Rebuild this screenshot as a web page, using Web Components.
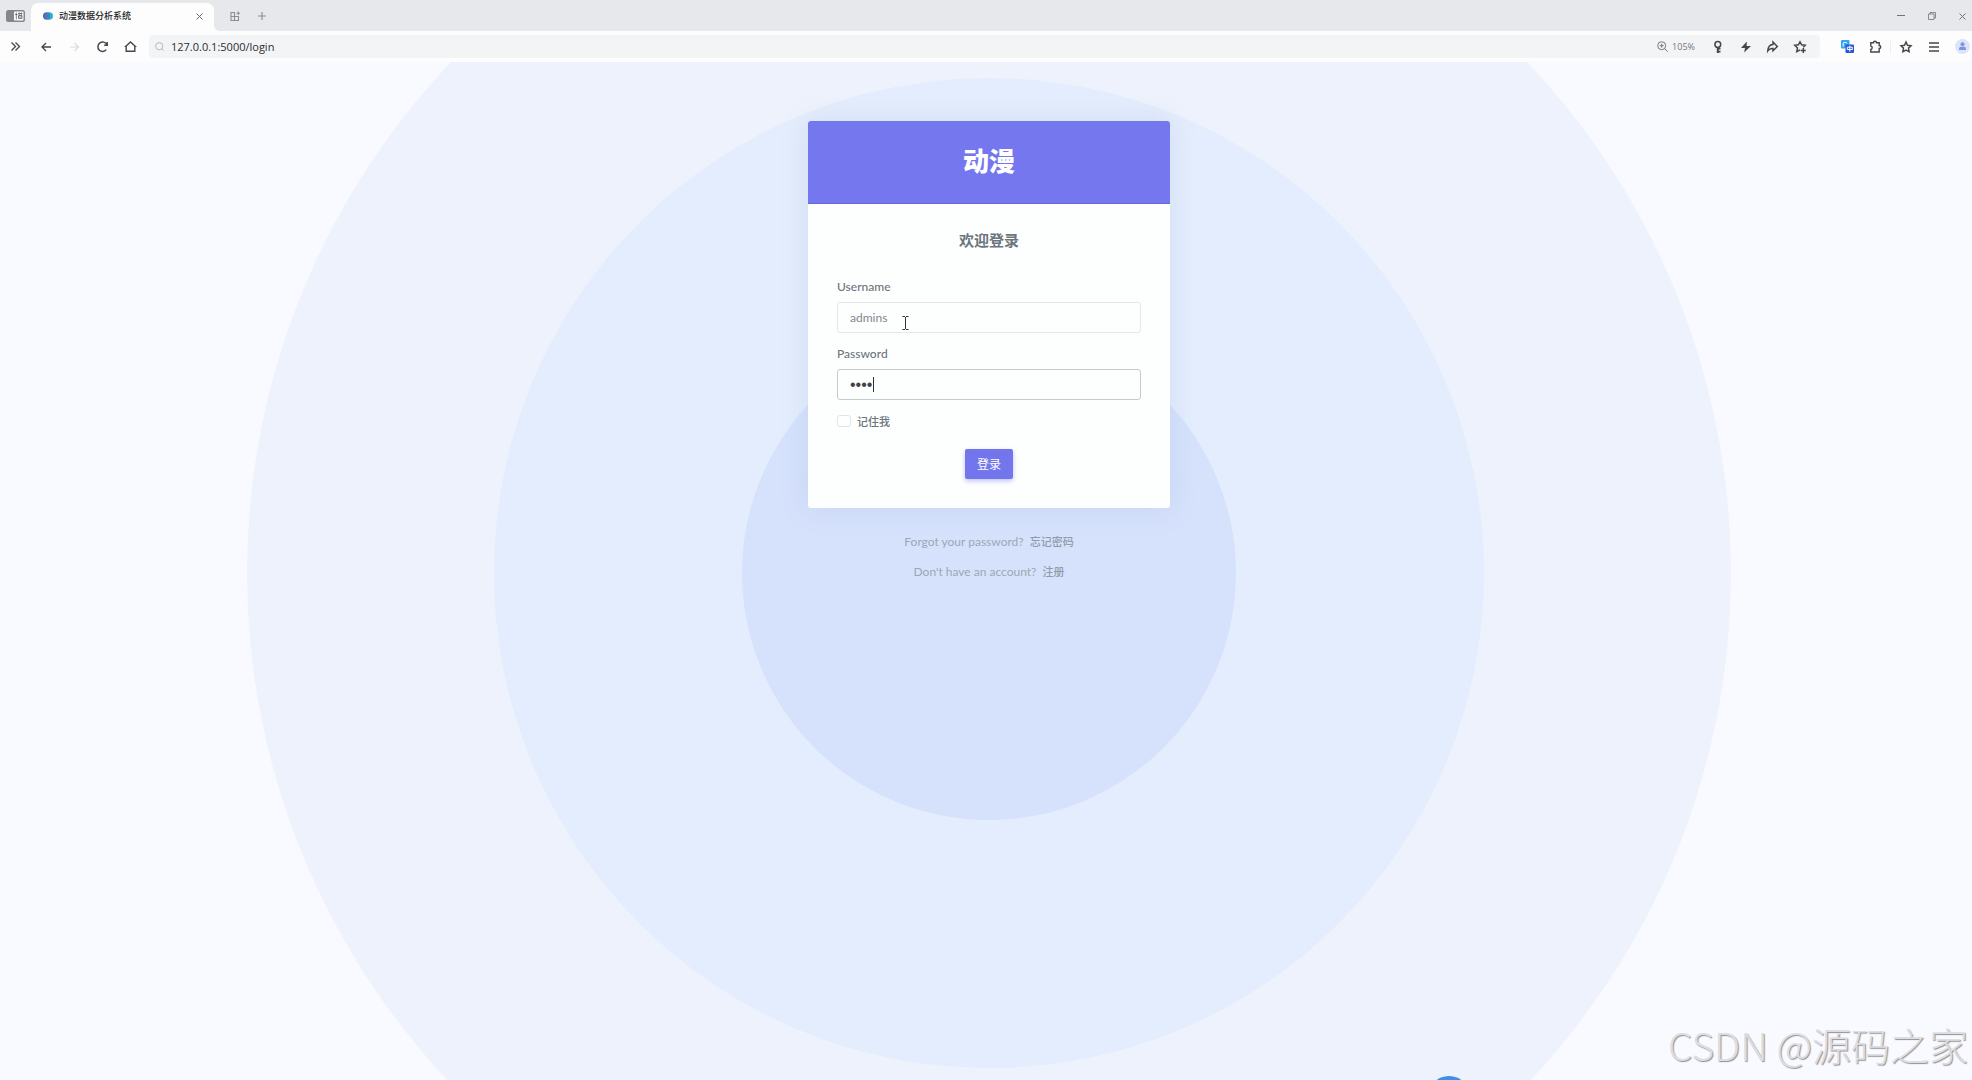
<!DOCTYPE html>
<html lang="zh-CN">
<head>
<meta charset="utf-8">
<title>动漫数据分析系统</title>
<style>
  html, body { height: 100%; margin: 0; }
  body { font-family: Lato, "Noto Sans CJK SC", sans-serif; overflow: hidden; }
</style>
</head>
<body>
<app-window>
  <tab-strip slot="tabs" label="动漫数据分析系统"></tab-strip>
  <nav-bar slot="nav" url="127.0.0.1:5000/login" zoom="105%"></nav-bar>
  <login-page></login-page>
</app-window>

<script>
const define = (name, html, setup) => {
  const template = document.createElement('template');
  template.innerHTML = html;
  customElements.define(name, class extends HTMLElement {
    constructor() {
      super();
      this.attachShadow({ mode: 'open' }).append(template.content.cloneNode(true));
    }
    connectedCallback() { if (setup) setup(this, this.shadowRoot); }
  });
};

define('app-window', `
  <style>
    :host { display: flex; flex-direction: column; height: 100vh; overflow: hidden; background: #f9faff; }
    ::slotted(login-page) { flex: 1; min-height: 0; }
  </style>
  <slot name="tabs"></slot><slot name="nav"></slot><slot></slot>`);

/* Icon button: the glyph is passed in as an inline SVG */
define('icon-button', `
  <style>
    :host { display: inline-flex; flex: none; width: var(--w, 26px); height: 24px; color: #45474c; }
    button { all: unset; display: flex; align-items: center; justify-content: center; width: 100%; height: 100%; cursor: pointer; }
    ::slotted(svg) { display: block; fill: none; stroke: currentColor; stroke-width: 1.5; overflow: visible; }
  </style>
  <button type="button"><slot></slot></button>`,
  (el, root) => root.querySelector('button').setAttribute('aria-label', el.getAttribute('name')));

define('tab-strip', `
  <style>
    :host { display: flex; align-items: flex-end; height: 31px; background: #e7e8ec; }
    .side { --w: 31px; align-self: center; }
    .tab { display: flex; align-items: center; box-sizing: border-box; width: 183px; height: 28px; padding: 0 3px 2px 12px; gap: 6px; background: #fdfdfe; border-radius: 7px 7px 0 0; position: relative; }
    .tab::after { content: ""; position: absolute; left: 100%; bottom: 0; width: 6px; height: 6px; background: radial-gradient(circle at 100% 0, transparent 6px, #fdfdfe 6px); }
    .title { flex: 1; font-size: 9px; line-height: 14px; font-weight: 500; color: #202124; white-space: nowrap; }
    .tab icon-button { --w: 24px; color: #66686c; }
    .extra { --w: 27px; height: 30px; color: #8b8d91; }
    .first { margin-left: 7px; }
    .win { display: flex; margin-left: auto; margin-right: -6px; }
    .win icon-button { --w: 31px; height: 30px; color: #707276; }
  </style>
  <icon-button class="side" name="侧边栏"><svg width="19" height="12" viewBox="0 0 19 12"><rect width="19" height="12" rx="2.500" fill="#85868a" stroke="none"/><rect x="8" y="1.500" width="9.500" height="9" rx="1" fill="#fff" stroke="none"/><path d="M9 4.500h2.500M10.300 2.500v7M12 3.500h4.500M13.200 2.500v3M15.300 2.500v3M12.500 5.500h3.500v3h-3.500zM12.500 7h3.500" stroke="#4b4c50" stroke-width=".7"/></svg></icon-button>
  <div class="tab">
    <svg width="10" height="8" viewBox="0 0 10 8"><circle cx="3.700" cy="4" r="3.700" fill="#635fa8"/><circle cx="6.300" cy="4" r="3.700" fill="#2fb1d1"/><path d="M5 .6a3.700 3.700 0 0 0 0 6.800a3.700 3.700 0 0 0 0-6.800" fill="#3a86c2"/></svg>
    <span class="title"></span>
    <icon-button name="关闭标签页"><svg width="7" height="7" viewBox="0 0 7 7"><path stroke-width="1" d="M.5.500l6 6M6.500.500l-6 6"/></svg></icon-button>
  </div>
  <icon-button class="extra first" name="标签页组"><svg width="10" height="10" viewBox="0 0 10 10"><path d="M1 1.500h3.500v4H1zM1 5.500h3.500v4H1zM4.500 5.500h4v4h-4zM6.500 2.200h3.500M8.200.5V4" stroke-width="1.100"/></svg></icon-button>
  <icon-button class="extra" name="新建标签页"><svg width="8" height="8" viewBox="0 0 8 8"><path d="M4 0v8M0 4h8" stroke-width="1.100"/></svg></icon-button>
  <div class="win">
    <icon-button name="最小化"><svg width="8" height="8" viewBox="0 0 8 8"><path d="M0 3.500h8" stroke-width="1"/></svg></icon-button>
    <icon-button name="还原"><svg width="8" height="8" viewBox="0 0 8 8"><path d="M.5 2h5.500v5.500H.5zM2 2V.500h5.500v5.500H6" stroke-width=".8"/></svg></icon-button>
    <icon-button name="关闭"><svg width="7" height="7" viewBox="0 0 7 7"><path d="M.5.500l6 6M6.500.500l-6 6" stroke-width="1"/></svg></icon-button>
  </div>`,
  (el, root) => root.querySelector('.title').textContent = el.getAttribute('label'));

define('nav-bar', `
  <style>
    :host { display: flex; align-items: center; height: 31px; background: #fdfdfe; overflow: hidden; }
    .left { display: flex; padding: 0 5px 0 2px; }
    .left icon-button { --w: 28px; }
    .left .more { --w: 26px; margin-right: 4px; }
    .left .off { color: #d9dbde; }
    .address { flex: 1; display: flex; align-items: center; height: 23px; padding: 0 7px 0 6px; background: #f3f4f6; border-radius: 4px; }
    .address > svg { fill: none; stroke: #b6b9be; }
    input { flex: 1; min-width: 0; border: 0; outline: 0; padding: 0 0 0 7px; height: 20px; background: none; font: 11px "Open Sans", sans-serif; color: #2c2e32; }
    .zoom { display: flex; align-items: center; gap: 4px; margin-right: 10px; font: 9px "Open Sans", sans-serif; color: #76787d; }
    .zoom svg { fill: none; stroke: #76787d; }
    .address icon-button { --w: 27px; }
    .right { display: flex; align-items: center; gap: 2px; margin: 0 -3px 0 14px; }
    hr { width: 1px; height: 14px; margin: 0; border: 0; background: #eeeff1; }
  </style>
  <div class="left">
    <icon-button class="more" name="展开"><svg width="9" height="9" viewBox="0 0 9 9"><path stroke-width="1.300" d="M.5.500l4 4-4 4M4.500.500l4 4-4 4"/></svg></icon-button>
    <icon-button name="后退"><svg width="10" height="10" viewBox="0 0 10 10"><path d="M10 5H1M5 1L1 5 5 9" stroke-width="1.300"/></svg></icon-button>
    <icon-button class="off" name="前进"><svg width="9" height="10" viewBox="0 0 9 10"><path d="M0 5h8.500M4.500 1l4 4-4 4" stroke-width="1.200"/></svg></icon-button>
    <icon-button name="刷新"><svg width="11" height="11" viewBox="0 0 11 11"><path d="M9.300 8.600A4.700 4.700 0 1 1 9.800 3.600M10.200 1v3.200H7.200"/></svg></icon-button>
    <icon-button name="主页"><svg width="11" height="11" viewBox="0 0 11 11"><path d="M.8 5.300L5.500.900l4.700 4.400H9.800v4.900h-8.600V5.300z" stroke-width="1.400"/></svg></icon-button>
  </div>
  <div class="address">
    <svg width="9" height="9" viewBox="0 0 9 9"><circle cx="4.200" cy="4.200" r="3.600"/><path d="M6.800 6.800l2 2"/></svg>
    <input type="text" aria-label="地址栏" spellcheck="false">
    <div class="zoom"><svg width="11" height="11" viewBox="0 0 11 11"><circle cx="4.700" cy="4.700" r="4"/><path d="M7.700 7.700l3 3M2.700 4.700h4M4.700 2.700v4"/></svg><span></span></div>
    <icon-button name="密码"><svg width="9" height="12" viewBox="0 0 9 12"><circle cx="3.800" cy="3.500" r="2.900"/><path d="M3.800 6.300V12" stroke-width="2"/><path d="M3.800 7.800h2.700M3.800 10.600h2.700" stroke-width="1.600"/></svg></icon-button>
    <icon-button name="加速"><svg width="10" height="12" viewBox="0 0 10 12"><path d="M5.800.500L0 7h4l-.8 4.500L10 5H5.600z" fill="currentColor" stroke="none"/></svg></icon-button>
    <icon-button name="分享"><svg width="11" height="11" viewBox="0 0 11 11"><path d="M6 1l4.300 4.500L6 9.800V7.500C3.500 7.200 2 8 .8 9.800 1 6 2.500 3.800 6 3.500z"/></svg></icon-button>
    <icon-button name="收藏本页"><svg width="12" height="12" viewBox="0 0 12 12"><path d="M6.200 8.800L2.800 10.600l.7-3.700L.8 4.300l3.600-.5L6 .900l1.600 2.900 3.600.5-2 2M9.300 7v5M6.800 9.500h5"/></svg></icon-button>
  </div>
  <div class="right">
    <icon-button name="翻译"><svg width="13" height="13" viewBox="0 0 13 13"><rect width="8.500" height="8.500" rx="1" fill="#36a6f2" stroke="none"/><path d="M2.200 6.500v-3q0-1 1-1h1.600q1 0 1 1" stroke="#fff" stroke-width="1"/><rect x="4.500" y="4.500" width="8.500" height="8.500" rx="1" fill="#2a55d8" stroke="none"/><path d="M6.300 7.200h5v2.300h-5zM8.800 5.700v6" stroke="#fff" stroke-width="1"/></svg></icon-button>
    <icon-button name="扩展"><svg width="11" height="12" viewBox="0 0 11 12"><path d="M.8 1.800h2.700a1.500 1.500 0 0 1 3 0h2.700v2.700a1.500 1.500 0 0 1 0 3v3.500H.8V8.500a1.800 1.800 0 0 0 0-3.500z" stroke-width="1.400"/></svg></icon-button>
    <hr>
    <icon-button name="收藏夹"><svg width="12" height="12" viewBox="0 0 12 12"><path d="M6 1l1.500 3.200 3.500.500-2.500 2.400.6 3.600L6 9l-3.100 1.700.6-3.600L1 4.700l3.500-.5z"/></svg></icon-button>
    <icon-button name="菜单"><svg width="10" height="10" viewBox="0 0 10 10"><path d="M0 1h10M0 5h10M0 9h10" stroke-width="1.400"/></svg></icon-button>
    <icon-button name="用户"><svg width="15" height="15" viewBox="0 0 15 15"><circle cx="7.500" cy="7.500" r="7.500" fill="#dde3f8" stroke="none"/><circle cx="7.500" cy="5.300" r="2" fill="#7d94e2" stroke="none"/><path d="M4 11V9.800Q4 7.800 6 7.800h3q2 0 2 2V11z" fill="#7d94e2" stroke="none"/></svg></icon-button>
  </div>`,
  (el, root) => {
    root.querySelector('input').value = el.getAttribute('url');
    root.querySelector('.zoom span').textContent = el.getAttribute('zoom');
  });

define('form-field', `
  <style>
    :host { display: block; }
    label { display: block; font-size: 12px; line-height: 18px; font-weight: 500; color: #6c757d; margin-bottom: 6px; }
    .box { position: relative; }
    input { display: block; box-sizing: border-box; width: 100%; height: 31px; padding: 0 12px; border: 1px solid #e3e8ea; border-radius: 3px; outline: 0; background: #fdfffe; font: 12px Lato, sans-serif; color: #80868b; }
    :host([active]) input { border-color: #c5cacd; color: #3f4347; font-family: "Liberation Sans", sans-serif; font-size: 16px; }
    .caret { display: none; position: absolute; left: 36px; top: 8px; width: 1px; height: 15px; background: #303236; }
    :host([active]) .caret { display: block; }
  </style>
  <label for="field"></label>
  <div class="box"><input id="field"><span class="caret"></span></div>`,
  (el, root) => {
    const input = root.querySelector('input');
    root.querySelector('label').textContent = el.getAttribute('label');
    input.type = el.getAttribute('type');
    input.value = el.getAttribute('value');
  });

define('login-card', `
  <style>
    :host { display: block; background: #fdfffe; border-radius: 3px; box-shadow: 0 0 28px rgba(120, 145, 185, .17); overflow: hidden; }
    header { display: flex; align-items: center; justify-content: center; box-sizing: border-box; height: 83px; padding-bottom: 4px; background: #7577ee; border-bottom: 1px solid #6769dc; }
    h1 { margin: 0; font: 900 26px/36px "Noto Sans CJK SC", sans-serif; color: #fff; }
    form { display: flex; flex-direction: column; padding: 26px 29px 29px; }
    h2 { margin: 0 0 28px; font: 700 15px/20px "Noto Sans CJK SC", sans-serif; text-align: center; color: #6c757d; }
    form-field { margin-bottom: 12px; }
    .remember { display: flex; align-items: center; gap: 6px; height: 18px; margin-bottom: 19px; font-size: 11px; font-weight: 500; color: #6c757d; }
    .remember input { appearance: none; box-sizing: border-box; width: 14px; height: 12px; margin: 0; border: 1px solid #dee4e8; border-radius: 3px; background: #fff; }
    .submit { align-self: center; width: 48px; height: 30px; padding: 0; border: 0; border-radius: 2px; background: #7375ec; box-shadow: 0 2px 5px rgba(114, 116, 236, .45); font: 12px/30px "Noto Sans CJK SC", sans-serif; color: #fff; cursor: pointer; }
  </style>
  <header><h1>动漫</h1></header>
  <form onsubmit="return false">
    <h2>欢迎登录</h2>
    <form-field label="Username" type="text" value="admins"></form-field>
    <form-field label="Password" type="password" value="1234" active></form-field>
    <div class="remember"><input id="remember" type="checkbox"><label for="remember">记住我</label></div>
    <button class="submit" type="submit">登录</button>
  </form>`);

define('hint-link', `
  <style>
    :host { display: flex; justify-content: center; align-items: center; gap: 6px; height: 30px; font-size: 12px; color: #9ca7b4; }
    a { font-size: 11px; font-weight: 500; color: #8f9bab; text-decoration: none; }
  </style>
  <span><slot></slot></span><a href="#"><slot name="action"></slot></a>`);

define('login-page', `
  <style>
    :host { --shift: 6px; display: block; position: relative; overflow: hidden; background: #f9faff; }
    .rings { position: absolute; left: calc(50% + var(--shift) / 2); top: 50%; width: 1484px; height: 1484px; margin-top: 2px; transform: translate(-50%, -50%); }
    .content { position: relative; padding: 59px 0 0 var(--shift); }
    .column { width: 362px; margin: 0 auto; }
    .hints { margin-top: 18px; }
    .cursor { position: absolute; left: 902px; top: 254px; fill: none; stroke: #303236; }
    .float { all: unset; position: absolute; left: 1428px; bottom: -38px; width: 42px; height: 42px; border-radius: 50%; background: #3f8fe8; }
    .mark { position: absolute; right: 4px; bottom: 12px; font: 300 39px/48px "Noto Sans CJK SC", sans-serif; color: #dcdee2; text-shadow: 1px 1px 1px #8e9094; white-space: nowrap; }
  </style>
  <svg class="rings" viewBox="0 0 1484 1484"><circle cx="742" cy="742" r="742" fill="#eef2fc"/><circle cx="742" cy="742" r="495" fill="#e3edfd"/><circle cx="742" cy="742" r="247" fill="#d6e2fc"/></svg>
  <div class="content">
    <div class="column">
      <login-card></login-card>
      <div class="hints">
        <hint-link>Forgot your password?<span slot="action">忘记密码</span></hint-link>
        <hint-link>Don't have an account?<span slot="action">注册</span></hint-link>
      </div>
    </div>
  </div>
  <svg class="cursor" width="7" height="14" viewBox="0 0 7 14"><path d="M.5.500H3M4 .5h2.500M3.500 1v12M.5 13.500H3M4 13.500h2.500"/></svg>
  <button class="float" type="button" aria-label="助手"></button>
  <div class="mark">CSDN @源码之家</div>`);
</script>
</body>
</html>
